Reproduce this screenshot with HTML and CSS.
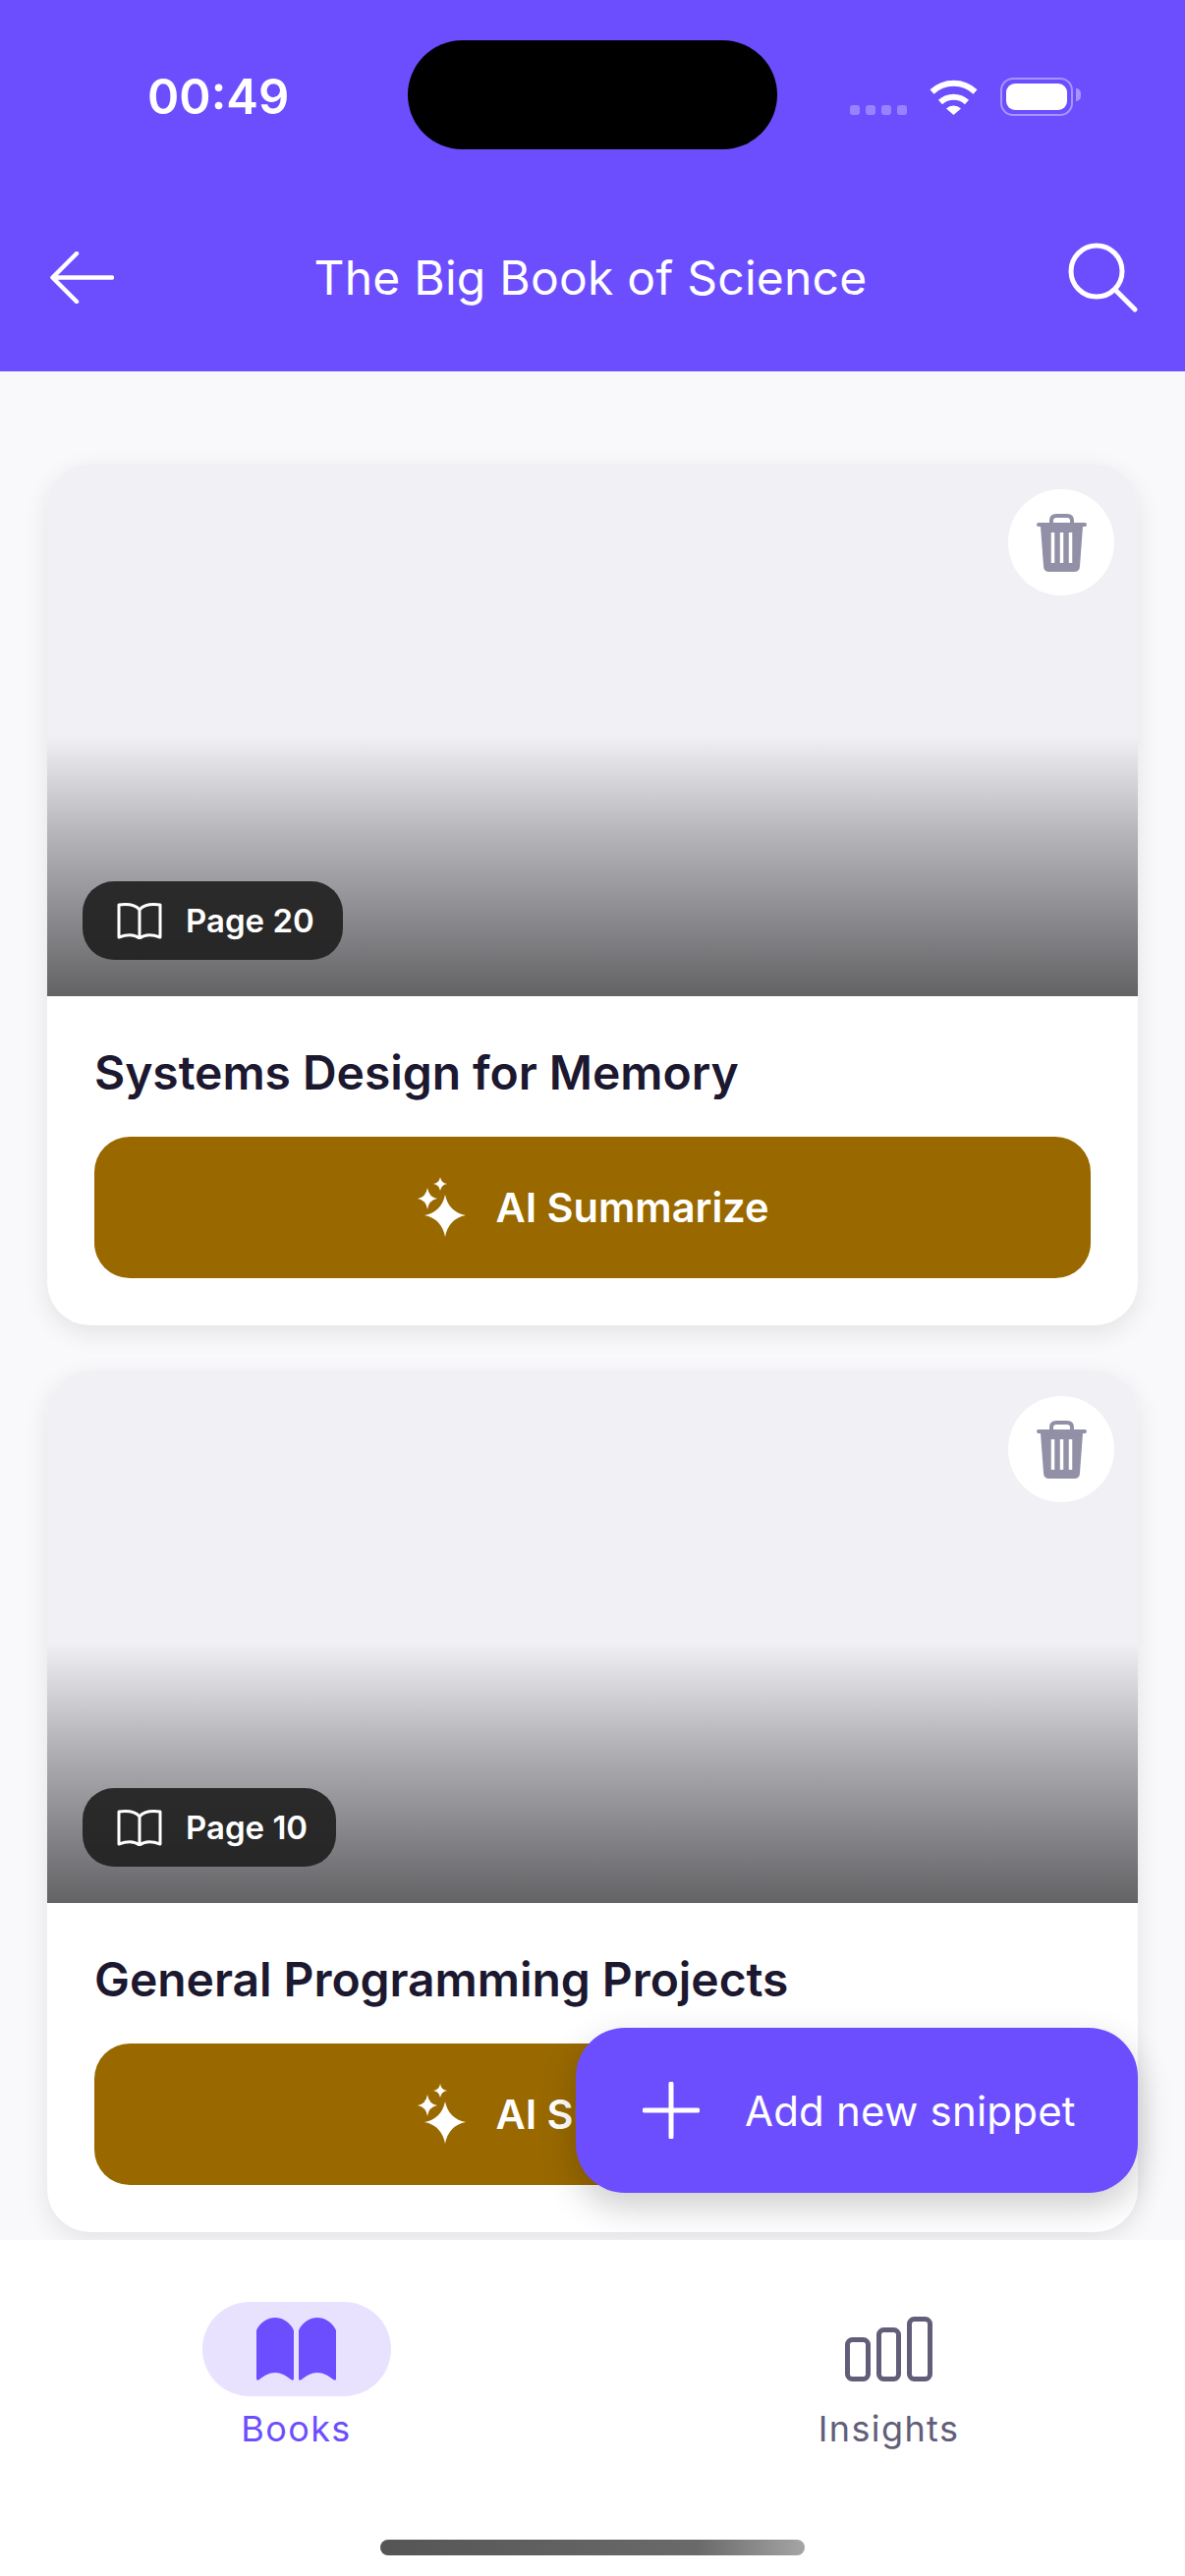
FILE: index.html

```html
<!DOCTYPE html>
<html lang="en">
<head>
    <meta charset="UTF-8">
    <meta name="viewport" content="width=device-width, initial-scale=1.0">
    <title>The Big Book of Science</title>
    <link rel="stylesheet" href="styles.css">
</head>
<body>
    <svg class="icon-defs" width="0" height="0" aria-hidden="true">
        <symbol id="icon-trash" viewBox="0 0 51 59">
            <path d="M15 11V7Q15 2 20 2H31Q36 2 36 7V11" fill="none" stroke="currentColor" stroke-width="4"/>
            <path d="M2 9H49Q51 9 51 11T49 13H47L44 53Q44 59 38 59H13Q7 59 7 53L4 13H2Q0 13 0 11T2 9Z" fill="currentColor"/>
            <path d="M16.5 19V50M25.5 19V50M34.500 19V50" fill="none" stroke="#fff" stroke-width="3.500"/>
        </symbol>
        <symbol id="icon-book" viewBox="0 0 46 37">
            <path d="M23 7C19 2 10 1 2 2V35C10 32 18 32 23 36C28 32 36 32 44 35V2C36 1 27 2 23 7ZM23 7V36" fill="none" stroke="currentColor" stroke-width="3" stroke-linejoin="round"/>
        </symbol>
        <symbol id="icon-sparkle" viewBox="0 0 54 64">
            <path d="M30 19Q33.500 36.500 51 40Q33.500 43.500 30 62Q26.500 43.500 9 40Q26.500 36.500 30 19Z" fill="currentColor"/>
            <path d="M12 12Q13.500 21.500 22 23Q13.500 24.500 12 34Q10.500 24.500 2 23Q10.500 21.500 12 12Z" fill="currentColor"/>
            <path d="M25 1Q26 7 32 8Q26 9 25 15Q24 9 18 8Q24 7 25 1Z" fill="currentColor"/>
        </symbol>
    </svg>

    <div class="app">
        <header class="appbar">
            <div class="status-bar">
                <span class="status-time">00:49</span>
                <div class="island"></div>
                <div class="status-icons">
                    <div class="signal">
                        <span></span><span></span><span></span><span></span>
                    </div>
                    <svg class="wifi" viewBox="0 0 49 37">
                        <path d="M2.500 13.500A32 32 0 0 1 46.500 13.500" fill="none" stroke="#fff" stroke-width="6"/>
                        <path d="M11 24A20 20 0 0 1 38 24" fill="none" stroke="#fff" stroke-width="6"/>
                        <path d="M17 30.500A11 11 0 0 1 32 30.500L24.500 37Z" fill="#fff"/>
                    </svg>
                    <div class="battery">
                        <div class="battery-fill"></div>
                    </div>
                </div>
            </div>
            <div class="nav-row">
                <svg class="back-icon" viewBox="0 0 65 53">
                    <path d="M27 2L2.500 26.500L27 51M3 26.500H63" fill="none" stroke="#fff" stroke-width="4.500" stroke-linecap="round" stroke-linejoin="round"/>
                </svg>
                <h1>The Big Book of Science</h1>
                <svg class="search-icon" viewBox="0 0 72 72">
                    <circle cx="30" cy="30" r="26" fill="none" stroke="#fff" stroke-width="5"/>
                    <path d="M49 49L69 69" fill="none" stroke="#fff" stroke-width="5" stroke-linecap="round"/>
                </svg>
            </div>
        </header>

        <main class="snippets">
            <article class="card">
                <div class="card-image">
                    <button class="delete-btn"><svg class="trash-icon"><use href="#icon-trash"/></svg></button>
                    <div class="page-tag">
                        <svg class="book-icon"><use href="#icon-book"/></svg>
                        <span>Page 20</span>
                    </div>
                </div>
                <div class="card-body">
                    <h2>Systems Design for Memory</h2>
                    <button class="summarize-btn">
                        <svg class="sparkle-icon"><use href="#icon-sparkle"/></svg>
                        <span>AI Summarize</span>
                    </button>
                </div>
            </article>

            <article class="card">
                <div class="card-image">
                    <button class="delete-btn"><svg class="trash-icon"><use href="#icon-trash"/></svg></button>
                    <div class="page-tag">
                        <svg class="book-icon"><use href="#icon-book"/></svg>
                        <span>Page 10</span>
                    </div>
                </div>
                <div class="card-body">
                    <h2>General Programming Projects</h2>
                    <button class="summarize-btn">
                        <svg class="sparkle-icon"><use href="#icon-sparkle"/></svg>
                        <span>AI Summarize</span>
                    </button>
                </div>
            </article>
        </main>

        <button class="fab">
            <svg class="plus-icon" viewBox="0 0 58 58">
                <path d="M29 2V56M2 29H56" fill="none" stroke="#fff" stroke-width="5" stroke-linecap="round"/>
            </svg>
            <span>Add new snippet</span>
        </button>

        <nav class="tabbar">
            <div class="tabs">
                <div class="tab tab-active">
                    <div class="tab-icon">
                        <svg class="tab-book" viewBox="0 0 81 65">
                            <path d="M0 13C4 4 12 0 19 0C26 0 34 4 38 13V62Q38 65 35 63C30 59 25 56 19 56C13 56 8 59 3 63Q0 65 0 62Z" fill="#6c4eff"/>
                            <path d="M43 13C47 4 55 0 62 0C69 0 77 4 81 13V62Q81 65 78 63C73 59 68 56 62 56C56 56 51 59 46 63Q43 65 43 62Z" fill="#6c4eff"/>
                        </svg>
                    </div>
                    <span>Books</span>
                </div>
                <div class="tab">
                    <div class="tab-icon">
                        <svg class="tab-chart" viewBox="0 0 89 66">
                            <rect x="2.500" y="23.500" width="21" height="40" rx="5" fill="none" stroke="#625e7a" stroke-width="5"/>
                            <rect x="34.500" y="13.500" width="20" height="50" rx="5" fill="none" stroke="#625e7a" stroke-width="5"/>
                            <rect x="65.500" y="2.500" width="21" height="61" rx="5" fill="none" stroke="#625e7a" stroke-width="5"/>
                        </svg>
                    </div>
                    <span>Insights</span>
                </div>
            </div>
            <div class="home-indicator"></div>
        </nav>
    </div>
</body>
</html>
```

FILE: styles.css

```css
* {
    box-sizing: border-box;
}

body {
    font-family: Inter, "Noto Sans", sans-serif;
    background-color: #fff;
    margin: 0;
    padding: 0;
}

button {
    font-family: inherit;
    border: none;
    padding: 0;
    cursor: pointer;
}

.icon-defs {
    position: absolute;
}

.app {
    position: relative;
    display: flex;
    flex-direction: column;
    width: 1206px;
    height: 2622px;
    overflow: hidden;
    background-color: #f9f9fc;
}

/* Header */
.appbar {
    height: 378px;
    flex-shrink: 0;
    background-color: #6c4eff;
    color: #fff;
}

.status-bar {
    position: relative;
    display: flex;
    justify-content: space-between;
    align-items: center;
    height: 196px;
    padding: 0 114px 0 150px;
}

.status-time {
    font-size: 49px;
    font-weight: 600;
}

.island {
    position: absolute;
    left: 415px;
    top: 41px;
    width: 376px;
    height: 111px;
    background-color: #000;
    border-radius: 56px;
}

.status-icons {
    display: flex;
    align-items: flex-end;
    height: 39px;
}

.signal {
    display: flex;
    gap: 6px;
    margin-right: 23px;
    margin-bottom: 1px;
}

.signal span {
    width: 10px;
    height: 10px;
    border-radius: 3px;
    background-color: rgba(255, 255, 255, 0.3);
}

.wifi {
    width: 49px;
    height: 37px;
    margin-right: 23px;
    margin-bottom: 1px;
}

.battery {
    position: relative;
    width: 74px;
    height: 39px;
    padding: 4px;
    border: 2px solid rgba(255, 255, 255, 0.4);
    border-radius: 13px;
}

.battery::after {
    content: "";
    position: absolute;
    right: -10px;
    top: 9px;
    width: 5px;
    height: 13px;
    border-radius: 0 6px 6px 0;
    background-color: rgba(255, 255, 255, 0.4);
}

.battery-fill {
    height: 100%;
    border-radius: 9px;
    background-color: #fff;
}

.nav-row {
    display: flex;
    align-items: center;
    height: 172px;
    padding: 0 48px 0 51px;
}

.nav-row h1 {
    flex: 1;
    margin: 0;
    font-size: 48px;
    font-weight: 400;
    letter-spacing: 0.25px;
    text-align: center;
}

.back-icon {
    width: 65px;
    height: 53px;
}

.search-icon {
    width: 72px;
    height: 72px;
}

/* Snippet cards */
.snippets {
    flex: 1;
    min-height: 0;
    overflow: hidden;
    display: flex;
    flex-direction: column;
    gap: 46px;
    padding: 94px 48px 0;
}

.card {
    flex-shrink: 0;
    border-radius: 44px;
    background-color: #fff;
    box-shadow: 0 8px 26px rgba(0, 0, 0, 0.09);
    overflow: hidden;
}

.card-image {
    position: relative;
    height: 542px;
    background: linear-gradient(to bottom, #f1f1f5 51%, #b3b3b8 70%, #636366 100%);
}

.delete-btn {
    position: absolute;
    top: 26px;
    right: 24px;
    display: flex;
    justify-content: center;
    align-items: center;
    width: 108px;
    height: 108px;
    border-radius: 50%;
    background-color: #fff;
    color: #9290a6;
}

.trash-icon {
    width: 51px;
    height: 59px;
}

.page-tag {
    position: absolute;
    left: 36px;
    bottom: 37px;
    display: flex;
    align-items: center;
    gap: 24px;
    height: 80px;
    padding: 0 29px 0 35px;
    border-radius: 32px;
    background-color: rgba(30, 30, 30, 0.9);
    color: #fff;
    font-size: 33px;
    font-weight: 600;
}

.book-icon {
    width: 46px;
    height: 37px;
}

.card-body {
    padding: 48px 48px;
}

.card-body h2 {
    margin: 0 0 35px;
    font-size: 48px;
    font-weight: 600;
    letter-spacing: -0.05px;
    line-height: 60px;
    color: #1c1830;
}

.summarize-btn {
    display: flex;
    justify-content: center;
    align-items: center;
    gap: 27px;
    width: 100%;
    height: 144px;
    border-radius: 36px;
    background-color: #996900;
    color: #fff;
    font-size: 41.500px;
    font-weight: 600;
}

.sparkle-icon {
    width: 54px;
    height: 64px;
}

/* Floating button */
.fab {
    position: absolute;
    right: 48px;
    top: 2064px;
    display: flex;
    align-items: center;
    gap: 46px;
    width: 572px;
    height: 168px;
    padding-left: 68px;
    border-radius: 50px;
    background-color: #6c4eff;
    box-shadow: 0 14px 36px rgba(0, 0, 0, 0.2);
    color: #fff;
    font-size: 42px;
    font-weight: 400;
    letter-spacing: 0.2px;
}

.plus-icon {
    width: 58px;
    height: 58px;
}

/* Bottom tabs */
.tabbar {
    display: flex;
    flex-direction: column;
    height: 342px;
    flex-shrink: 0;
    padding-top: 63px;
    background-color: #fff;
}

.tabs {
    display: grid;
    grid-template-columns: 1fr 1fr;
}

.tab {
    display: flex;
    flex-direction: column;
    align-items: center;
    gap: 11px;
    font-size: 36px;
    letter-spacing: 1.400px;
    line-height: 44px;
    color: #625e7a;
}

.tab-active {
    color: #6c4eff;
}

.tab-icon {
    display: flex;
    justify-content: center;
    align-items: center;
    width: 192px;
    height: 96px;
    border-radius: 48px;
}

.tab-active .tab-icon {
    background-color: #e8e2ff;
}

.tab-book {
    width: 81px;
    height: 65px;
}

.tab-chart {
    width: 89px;
    height: 66px;
}

.home-indicator {
    width: 432px;
    height: 16px;
    margin: auto auto 21px;
    border-radius: 8px;
    background: linear-gradient(to right, #555 0%, #6a6a6a 75%, #a5a5a5 100%);
}
```
